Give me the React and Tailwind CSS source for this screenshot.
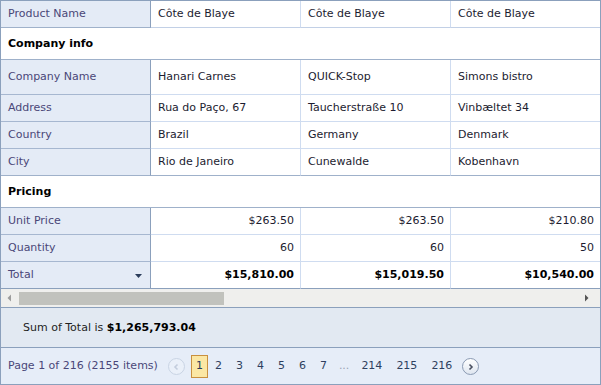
import React from "react";

const font = { fontFamily: '"DejaVu Sans", Verdana, sans-serif' };

const companies = [
  { name: "Hanari Carnes", address: "Rua do Paço, 67", country: "Brazil", city: "Rio de Janeiro", price: "$263.50", qty: "60", total: "$15,810.00" },
  { name: "QUICK-Stop", address: "Taucherstraße 10", country: "Germany", city: "Cunewalde", price: "$263.50", qty: "60", total: "$15,019.50" },
  { name: "Simons bistro", address: "Vinbæltet 34", country: "Denmark", city: "Kobenhavn", price: "$210.80", qty: "50", total: "$10,540.00" },
];

const Row = ({ label, values, h, right, bold, extra, borderB = "border-b-[#cfdcf0]", headB = "border-b-[#a6b7d0]" }) => (
  <div className={`flex ${h}`}>
    <div className={`w-[150px] shrink-0 flex items-center justify-between pl-[7px] pr-[8px] pt-[1px] bg-[#e4ebf6] text-[#4a4778] border-r border-r-[#8ba0bc] border-b ${headB}`}>
      <span>{label}</span>
      {extra}
    </div>
    {values.map((v, i) => (
      <div
        key={i}
        className={`flex items-center pt-[1px] bg-white border-b ${borderB} ${i < 2 ? "w-[150px] border-r border-r-[#cfdcf0]" : "w-[149px]"} ${right ? "justify-end pr-[6px]" : "pl-[7px]"} ${bold ? "font-bold text-black" : "text-[#1c1c30]"}`}
      >
        {v}
      </div>
    ))}
  </div>
);

const GroupRow = ({ label, h }) => (
  <div className={`flex items-center ${h} pl-[7px] pt-[2px] bg-white font-bold text-black border-b border-b-[#9fb1ca]`}>
    {label}
  </div>
);

const Circle = ({ dir, disabled }) => (
  <div
    className={`w-[17px] h-[17px] rounded-full border flex items-center justify-center ${disabled ? "border-[#c9d4e4] bg-[#eaf0f9]" : "border-[#8a9ab3] bg-gradient-to-b from-white to-[#dfe6f0]"}`}
  >
    <svg width="7" height="8" viewBox="0 0 7 8">
      <path
        d={dir === "left" ? "M4.5 1.5 L2 4 L4.5 6.5" : "M2.5 1.5 L5 4 L2.5 6.5"}
        fill="none"
        stroke={disabled ? "#c3cddd" : "#4a5060"}
        strokeWidth="1.6"
      />
    </svg>
  </div>
);

export default function App() {
  const pages = ["2", "3", "4", "5", "6", "7", "...", "214", "215", "216"];
  return (
    <div style={font} className="w-[601px] h-[385px] text-[11px] border border-[#8ba0bc] flex flex-col overflow-hidden bg-white">
      <Row label="Product Name" h="h-[27px]" values={["Côte de Blaye", "Côte de Blaye", "Côte de Blaye"]} borderB="border-b-[#c2d0e6]" headB="border-b-[#9fb1ca]" />
      <GroupRow label="Company info" h="h-[32px]" />
      <Row label="Company Name" h="h-[35px]" values={companies.map((c) => c.name)} />
      <Row label="Address" h="h-[27px]" values={companies.map((c) => c.address)} />
      <Row label="Country" h="h-[27px]" values={companies.map((c) => c.country)} />
      <Row label="City" h="h-[27px]" values={companies.map((c) => c.city)} borderB="border-b-[#9fb1ca]" headB="border-b-[#9fb1ca]" />
      <GroupRow label="Pricing" h="h-[32px]" />
      <Row label="Unit Price" h="h-[27px]" right values={companies.map((c) => c.price)} />
      <Row label="Quantity" h="h-[27px]" right values={companies.map((c) => c.qty)} />
      <Row
        label="Total"
        h="h-[27px]"
        right
        bold
        borderB="border-b-[#8ba0bc]"
        headB="border-b-[#8ba0bc]"
        values={companies.map((c) => c.total)}
        extra={
          <svg width="7" height="4" viewBox="0 0 7 4">
            <path d="M0 0 H7 L3.5 4 Z" fill="#2b3d5b" />
          </svg>
        }
      />
      {/* horizontal scrollbar */}
      <div className="h-[19px] shrink-0 flex items-center bg-[#efefed] border-b border-b-[#8ba0bc] pb-[1px]">
        <svg width="18" height="8" viewBox="0 0 18 8" className="shrink-0">
          <path d="M10 0.5 L6.5 4 L10 7.5 Z" fill="#9c9c9c" />
        </svg>
        <div className="w-[205px] h-[13px] bg-[#c1c2bd] mt-[1px]" />
        <div className="flex-1" />
        <svg width="12" height="8" viewBox="0 0 12 8" className="shrink-0 mr-[4px]">
          <path d="M1 0.5 L4.5 4 L1 7.5 Z" fill="#555555" />
        </svg>
      </div>
      {/* footer */}
      <div className="h-[40px] shrink-0 flex items-center pl-[22px] pt-[1px] bg-[#e2e9f2] border-b border-b-[#8ba0bc] text-[#1e1e1e]">
        Sum of Total is&nbsp;<span className="font-bold text-black">$1,265,793.04</span>
      </div>
      {/* pager */}
      <div className="flex-1 flex items-center pl-[7px] pt-[1px] bg-[#e6edf8] text-[#4a4778]">
        <span>Page 1 of 216 (2155 items)</span>
        <div className="ml-[10px]">
          <Circle dir="left" disabled />
        </div>
        <div className="ml-[6px] w-[17px] h-[23px] flex items-center justify-center bg-[#fbe7a4] border border-[#c9903f] text-[#2b3d5b]">
          1
        </div>
        {pages.map((p) => (
          <span key={p} className={p === "..." ? "px-[5px] text-[#9aa3b5]" : "px-[7px] text-[#2e3f5f]"}>
            {p}
          </span>
        ))}
        <div className="ml-[3px]">
          <Circle dir="right" />
        </div>
      </div>
    </div>
  );
}
